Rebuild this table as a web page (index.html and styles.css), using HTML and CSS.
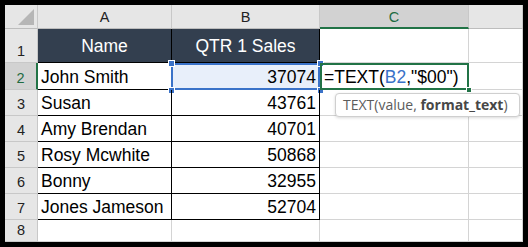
FILE: index.html
```html
<!DOCTYPE html>
<html>
<head>
<meta charset="utf-8">
<link rel="stylesheet" href="styles.css">
</head>
<body>
<div class="frame">
  <div class="sheet">
    <div class="corner"><span class="tri"></span></div>
    <div class="colh">A</div>
    <div class="colh">B</div>
    <div class="colh colh-sel">C</div>
    <div class="colh"></div>

    <div class="rowh">1</div>
    <div class="cell th">Name</div>
    <div class="cell th">QTR 1 Sales</div>
    <div class="cell"></div>
    <div class="cell"></div>

    <div class="rowh rowh-sel">2</div>
    <div class="cell t">John Smith</div>
    <div class="cell t num ref">37074
      <span class="refbox"></span>
      <span class="hd hd-tl"></span><span class="hd hd-tr"></span><span class="hd hd-bl"></span><span class="hd hd-br"></span>
    </div>
    <div class="cell active">=TEXT(<span class="refword">B2</span>,"$00")
      <span class="actbox"></span>
      <span class="fill"></span>
      <div class="tip">TEXT(value, <b>format_text</b>)</div>
    </div>
    <div class="cell"></div>

    <div class="rowh">3</div>
    <div class="cell t">Susan</div>
    <div class="cell t num">43761</div>
    <div class="cell"></div>
    <div class="cell"></div>

    <div class="rowh">4</div>
    <div class="cell t">Amy Brendan</div>
    <div class="cell t num">40701</div>
    <div class="cell"></div>
    <div class="cell"></div>

    <div class="rowh">5</div>
    <div class="cell t">Rosy Mcwhite</div>
    <div class="cell t num">50868</div>
    <div class="cell"></div>
    <div class="cell"></div>

    <div class="rowh">6</div>
    <div class="cell t">Bonny</div>
    <div class="cell t num">32955</div>
    <div class="cell"></div>
    <div class="cell"></div>

    <div class="rowh">7</div>
    <div class="cell t">Jones Jameson</div>
    <div class="cell t num">52704</div>
    <div class="cell"></div>
    <div class="cell"></div>

    <div class="rowh">8</div>
    <div class="cell"></div>
    <div class="cell"></div>
    <div class="cell"></div>
    <div class="cell"></div>
  </div>
</div>
</body>
</html>
```

FILE: styles.css
```css
* { box-sizing: border-box; }
html, body { margin: 0; padding: 0; background: #000; }
.frame {
  width: 528px;
  height: 247px;
  background: #000;
  padding: 5px;
  overflow: hidden;
}
.sheet {
  display: grid;
  grid-template-columns: 33px 134px 148px 149px 54px;
  grid-template-rows: 24px 34px 27px 26px 26px 26px 26px 26px 22px;
  background: #fff;
  height: 237px;
  overflow: hidden;
  font-family: "Liberation Sans", Arial, sans-serif;
  color: #000;
}
.corner {
  background: #e6e6e6;
  border-right: 1px solid #c8c8c8;
  border-bottom: 1px solid #bdbdbd;
  position: relative;
}
.tri {
  position: absolute;
  right: 3px;
  bottom: 3px;
  width: 0;
  height: 0;
  border-left: 16px solid transparent;
  border-bottom: 16px solid #b6b6b6;
}
.colh {
  background: #e6e6e6;
  border-right: 1px solid #c8c8c8;
  border-bottom: 1px solid #bdbdbd;
  display: flex;
  align-items: center;
  justify-content: center;
  font-size: 14.5px;
  color: #222;
  padding-top: 1px;
}
.colh-sel {
  background: #d2d2d2;
  color: #1e6b42;
  border-bottom: 2px solid #217346;
}
.rowh {
  background: #e6e6e6;
  border-right: 1px solid #c8c8c8;
  border-bottom: 1px solid #c8c8c8;
  display: flex;
  align-items: flex-end;
  justify-content: center;
  font-size: 14.5px;
  color: #222;
  padding-bottom: 3px;
  line-height: 16px;
}
.rowh-sel {
  background: #d2d2d2;
  color: #1e6b42;
  border-right: 2px solid #217346;
}
.cell {
  border-right: 1px solid #d4d4d4;
  border-bottom: 1px solid #d4d4d4;
  display: flex;
  align-items: flex-end;
  font-size: 17.5px;
  line-height: 20px;
  padding: 0 3px 2px 3px;
  white-space: nowrap;
  position: relative;
}
.t {
  border-right-color: #000;
  border-bottom-color: #000;
}
.th {
  background: #333f4f;
  color: #fff;
  justify-content: center;
  align-items: center;
  border-right-color: #000;
  border-bottom-color: #000;
  padding: 0;
}
.num { justify-content: flex-end; }
.ref { background: #e8effa; }
.refbox {
  position: absolute;
  left: -1px;
  top: 0;
  right: -1px;
  bottom: -1px;
  border: 2px solid #3a72c8;
}
.hd {
  position: absolute;
  width: 5px;
  height: 5px;
  background: #3a72c8;
  box-shadow: 0 0 0 1px #fff;
}
.hd-tl { left: -3px; top: -2px; }
.hd-tr { right: -4px; top: -2px; }
.hd-bl { left: -3px; bottom: -4px; }
.hd-br { right: -4px; bottom: -4px; }
.active { padding-left: 4px; z-index: 2; }
.actbox {
  position: absolute;
  left: 0;
  top: 0;
  right: -1px;
  bottom: -1px;
  border: 2px solid #217346;
}
.fill {
  position: absolute;
  right: -3px;
  bottom: -3px;
  width: 4px;
  height: 4px;
  background: #217346;
  box-shadow: 0 0 0 1px #fff;
}
.refword { color: #3a72c8; }
.tip {
  position: absolute;
  left: 15px;
  top: 30px;
  width: 185px;
  height: 24px;
  background: #fff;
  border: 1px solid #cfcfcf;
  border-radius: 4px;
  box-shadow: 0 1px 3px rgba(0, 0, 0, 0.15);
  font-family: "Open Sans", "Noto Sans", sans-serif;
  font-size: 14px;
  line-height: 21px;
  color: #5c5c5c;
  padding-left: 7px;
}
.tip b { color: #474747; font-weight: 700; }
```
